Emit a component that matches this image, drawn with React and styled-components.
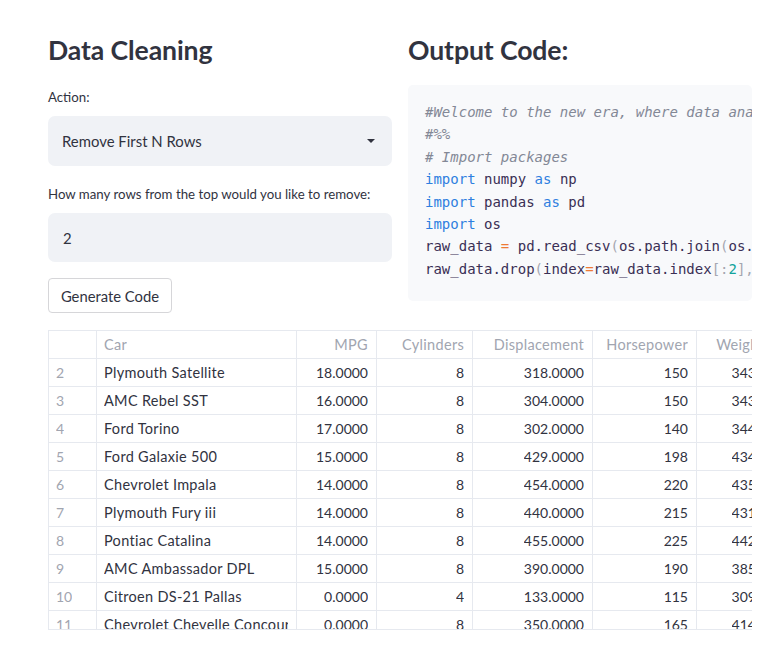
import React from "react";
import styled, { createGlobalStyle } from "styled-components";

const Global = createGlobalStyle`
  html, body { margin: 0; padding: 0; background: #ffffff; }
  body {
    font-family: "Lato", "Noto Sans", "Liberation Sans", sans-serif;
    color: #31333f;
    -webkit-font-smoothing: antialiased;
  }
  * { box-sizing: border-box; }
`;

const Page = styled.main`
  width: 774px;
  height: 663px;
  overflow: hidden;
  padding: 33px 22px 0 48px;
`;

const Columns = styled.div`
  display: grid;
  grid-template-columns: 344px 344px;
  column-gap: 16px;
  align-items: start;
`;

const Column = styled.section`
  display: flex;
  flex-direction: column;
`;

const Heading = styled.h2`
  margin: 0;
  font-size: 26.6px;
  line-height: 34px;
  font-weight: 700;
  color: #31333f;
  letter-spacing: -0.1px;
`;

const Label = styled.label`
  display: block;
  margin-top: ${(p) => p.$top}px;
  margin-bottom: 9px;
  font-size: 13.25px;
  line-height: 20px;
  color: #31333f;
`;

const Field = styled.div`
  height: ${(p) => p.$h}px;
  background: #f0f2f6;
  border-radius: 7px;
  display: flex;
  align-items: center;
  justify-content: space-between;
  padding: 0 17px 0 ${(p) => p.$pad}px;
  font-size: 14.9px;
  color: #31333f;
`;

const Caret = styled.span`
  width: 0;
  height: 0;
  border-left: 4px solid transparent;
  border-right: 4px solid transparent;
  border-top: 4px solid #31333f;
`;

const Button = styled.button`
  align-self: flex-start;
  margin-top: 16px;
  height: 35px;
  width: 124px;
  padding: 0;
  background: #ffffff;
  border: 1px solid #d6d6d9;
  border-radius: 4px;
  font-family: inherit;
  font-size: 14.8px;
  color: #31333f;
`;

const CodeBox = styled.pre`
  margin: 18px 0 0 0;
  background: #f8f9fb;
  border-radius: 5px;
  padding: 16px 0 21px 17px;
  overflow: hidden;
  white-space: pre;
  font-family: "DejaVu Sans Mono", "Liberation Mono", monospace;
  font-size: 14px;
  line-height: 22.4px;
  color: #31333f;
`;

const Tok = styled.span`
  color: ${(p) =>
    p.$k === "c" ? "#838896" :
    p.$k === "k" ? "#2f7fe0" :
    p.$k === "o" ? "#ee7a35" :
    p.$k === "p" ? "#a4a6b0" :
    p.$k === "n" ? "#13a39b" : "#3a2f55"};
  font-style: ${(p) => (p.$k === "c" ? "italic" : "normal")};
`;

const TableWrap = styled.div`
  margin-top: 17px;
  width: 704px;
  height: 300px;
  overflow: hidden;
  border-top: 1px solid #e6e9ef;
  border-left: 1px solid #e6e9ef;
  border-bottom: 1px solid #e6e9ef;
`;

const Grid = styled.div`
  display: grid;
  grid-template-columns: 48px 200px 80px 96px 120px 104px 76px;
  grid-auto-rows: 28px;
  width: 724px;
`;

const Cell = styled.div`
  border-right: 1px solid #e6e9ef;
  border-bottom: 1px solid #e6e9ef;
  padding: 0 8px 0 7px;
  display: flex;
  align-items: center;
  justify-content: ${(p) => (p.$right ? "flex-end" : "flex-start")};
  white-space: nowrap;
  overflow: hidden;
  color: ${(p) => (p.$muted ? "#a1a5b0" : "#31333f")};
`;

const CellText = styled.span`
  display: block;
  overflow: hidden;
  white-space: nowrap;
  font-size: ${(p) => (p.$num ? "14px" : "14.5px")};
  letter-spacing: ${(p) => (p.$num ? "0" : "0.3px")};
`;

const columns = [
  { name: "", right: false },
  { name: "Car", right: false },
  { name: "MPG", right: true },
  { name: "Cylinders", right: true },
  { name: "Displacement", right: true },
  { name: "Horsepower", right: true },
  { name: "Weight", right: true },
];

const rows = [
  ["2", "Plymouth Satellite", "18.0000", "8", "318.0000", "150", "3436"],
  ["3", "AMC Rebel SST", "16.0000", "8", "304.0000", "150", "3433"],
  ["4", "Ford Torino", "17.0000", "8", "302.0000", "140", "3449"],
  ["5", "Ford Galaxie 500", "15.0000", "8", "429.0000", "198", "4341"],
  ["6", "Chevrolet Impala", "14.0000", "8", "454.0000", "220", "4354"],
  ["7", "Plymouth Fury iii", "14.0000", "8", "440.0000", "215", "4312"],
  ["8", "Pontiac Catalina", "14.0000", "8", "455.0000", "225", "4425"],
  ["9", "AMC Ambassador DPL", "15.0000", "8", "390.0000", "190", "3850"],
  ["10", "Citroen DS-21 Pallas", "0.0000", "4", "133.0000", "115", "3090"],
  ["11", "Chevrolet Chevelle Concours (sw)", "0.0000", "8", "350.0000", "165", "4142"],
  ["12", "Ford Torino (sw)", "0.0000", "8", "351.0000", "153", "4034"],
];

const code = [
  [["c", "#Welcome to the new era, where data analysis becomes easy"]],
  [["c", "#%%"]],
  [["c", "# Import packages"]],
  [["k", "import"], ["t", " numpy "], ["k", "as"], ["t", " np"]],
  [["k", "import"], ["t", " pandas "], ["k", "as"], ["t", " pd"]],
  [["k", "import"], ["t", " os"]],
  [["t", "raw_data "], ["o", "="], ["t", " pd.read_csv"], ["p", "("], ["t", "os.path.join"], ["p", "("], ["t", "os.getcwd"], ["p", "(),"], ["t", " 'data.csv'"], ["p", "))"]],
  [["t", "raw_data.drop"], ["p", "("], ["t", "index"], ["o", "="], ["t", "raw_data.index"], ["p", "[:"], ["n", "2"], ["p", "],"], ["t", " inplace"], ["o", "="], ["k", "True"], ["p", ")"]],
];

export default function App() {
  return (
    <>
      <Global />
      <Page>
        <Columns>
          <Column>
            <Heading>Data Cleaning</Heading>
            <Label $top={20}>Action:</Label>
            <Field $h={50} $pad={14}>
              <span>Remove First N Rows</span>
              <Caret />
            </Field>
            <Label $top={18}>How many rows from the top would you like to remove:</Label>
            <Field $h={49} $pad={15}>
              <span>2</span>
            </Field>
            <Button>Generate Code</Button>
          </Column>
          <Column>
            <Heading>Output Code:</Heading>
            <CodeBox>
              {code.map((line, i) => (
                <div key={i}>
                  {line.map(([k, t], j) => (
                    <Tok key={j} $k={k}>{t}</Tok>
                  ))}
                </div>
              ))}
            </CodeBox>
          </Column>
        </Columns>
        <TableWrap>
          <Grid>
            {columns.map((c, i) => (
              <Cell key={"h" + i} $right={c.right} $muted>
                <CellText>{c.name}</CellText>
              </Cell>
            ))}
            {rows.map((r, ri) =>
              r.map((v, ci) => (
                <Cell key={ri + "-" + ci} $right={columns[ci].right} $muted={ci === 0}>
                  <CellText $num={ci !== 1}>{v}</CellText>
                </Cell>
              ))
            )}
          </Grid>
        </TableWrap>
      </Page>
    </>
  );
}
